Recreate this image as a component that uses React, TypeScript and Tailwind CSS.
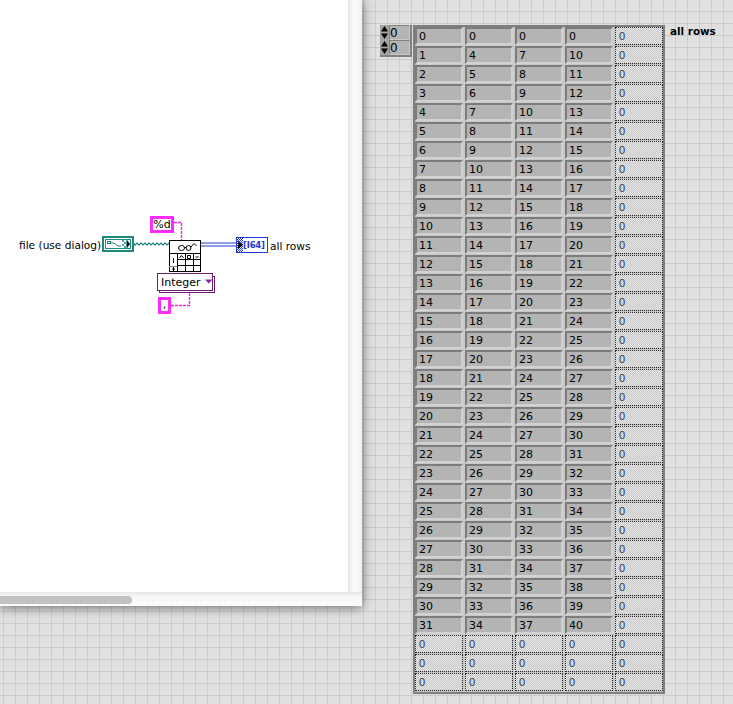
const font = "font-['DejaVu_Sans','Liberation_Sans',sans-serif]";

const rows = Array.from({ length: 35 }, (_, r) => r);

function cellValue(r: number, c: number) {
  if (r === 0) return 0;
  return r + c * 3;
}

function DataCell({ value }: { value: number }) {
  return (
    <div className="flex h-[18px] w-[48px] items-center border-2 border-t-[#7c7c7c] border-l-[#7c7c7c] border-r-[#d2d2d2] border-b-[#d2d2d2] bg-[#b4b4b4] pl-[2px] text-[11px] leading-none text-black">
      {value}
    </div>
  );
}

function EmptyCell() {
  return (
    <div className="flex h-[18px] w-[48px] items-center border border-dotted border-[#222] bg-[repeating-conic-gradient(#c8c8c8_0%_25%,#e6e6e6_0%_50%)] bg-[length:2px_2px] pl-[3px] font-['Liberation_Sans',sans-serif] text-[11px] leading-none text-[#2f3658]">
      0
    </div>
  );
}

function Spinner() {
  return (
    <div className="flex h-[15px] items-center">
      <svg width="9" height="15" viewBox="0 0 9 15" className="shrink-0">
        <rect width="9" height="15" fill="#a4a4a4" />
        <path d="M4.500 1 8 6.500H1z" fill="#000" />
        <path d="M4.500 14 1 8.500h7z" fill="#000" />
      </svg>
      <div className="flex h-[15px] flex-1 items-center border border-[#c8c8c8] border-t-[#808080] border-l-[#808080] bg-[#b4b4b4] text-[12px] leading-none text-black">
        0
      </div>
    </div>
  );
}

function PinkConstant({ className, children }: { className: string; children: string }) {
  return (
    <div className={`absolute flex items-center justify-center border-[3px] border-[#ff2bff] bg-white text-[11px] leading-none text-black ${className}`}>
      {children}
    </div>
  );
}

function Wires() {
  const teal = "M134 243.5" + Array.from({ length: 18 }, (_, i) => ` L${135 + i * 2} ${i % 2 ? 243 : 245}`).join("");
  return (
    <svg width="348" height="592" className="absolute left-0 top-0">
      <path d={teal} fill="none" stroke="#1c7f78" strokeWidth="1.2" />
      <path d="M201 243H236M201 246H236" stroke="#1f38d8" strokeWidth="1" />
      <path d="M201 244.5H236" stroke="#fff" strokeWidth="1" />
      <path d="M174 222.5H181.5V240" fill="none" stroke="#f020f0" strokeWidth="1.3" strokeDasharray="3 1" />
      <path d="M171 305.5H189.5V291" fill="none" stroke="#f020f0" strokeWidth="1.3" strokeDasharray="3 1" />
    </svg>
  );
}

function ReadIcon() {
  return (
    <svg width="32" height="32" viewBox="0 0 32 32" className="absolute left-[169px] top-[240px]">
      <rect x="0.5" y="0.5" width="31" height="31" fill="#fff" stroke="#000" />
      <path d="M0 13.5H32" stroke="#000" />
      <ellipse cx="12.500" cy="8" rx="3" ry="2.500" fill="none" stroke="#000" />
      <ellipse cx="19.500" cy="8" rx="2.500" ry="2.500" fill="none" stroke="#000" />
      <path d="M15.500 7.500h1.500M22 7l3-3.500 2.500 2.500" fill="none" stroke="#000" />
      <path d="M8.500 14v18M16.500 14v18M24.500 14v18M8 19.500H32M8 25.500H32" stroke="#000" fill="none" />
      <path d="M4.500 18v5M3 29h3M4.500 27v4" stroke="#000" />
      <path d="M0 26.500H8" stroke="#888" />
      <path d="M10.500 18l2-2.500 2 2.500M18.500 15.500h3v3h-3zM26.500 17h3" fill="none" stroke="#000" />
    </svg>
  );
}

function Diagram() {
  return (
    <div className={`relative flex-1 overflow-hidden bg-white ${font}`}>
      <Wires />
      <span className="absolute left-[19px] top-[238px] text-[10.6px] leading-[14px] text-black">file (use dialog)</span>
      <div className="absolute left-[102px] top-[236px] h-[16px] w-[32px] border-[2px] border-[#1c8a80] bg-white p-[1px]">
        <div className="relative h-full w-full border border-[#1c8a80]">
          <svg width="24" height="8" viewBox="0 0 24 8" className="absolute left-0 top-0">
            <rect x="1.500" y="1.500" width="3" height="2" fill="#fff" stroke="#1c7f78" />
            <path d="M5 3h3l4 3h3" fill="none" stroke="#1c7f78" />
            <path d="M16 0h2v2h-2zM18 2h2v2h-2zM16 4h2v2h-2zM18 6h2v2h-2zM20 0h1v8h-1z" fill="#5aa9a2" />
            <path d="M21 0l3 4-3 4z" fill="#000" />
          </svg>
        </div>
      </div>
      <PinkConstant className="left-[150px] top-[216px] h-[17px] w-[24px]">%d</PinkConstant>
      <ReadIcon />
      <div className="absolute left-[236px] top-[237px] flex h-[16px] w-[32px] items-center border border-[#1f38d8] bg-white">
        <div className="relative h-full w-[6px] shrink-0 bg-[repeating-conic-gradient(#1f38d8_0%_25%,#ffffff_0%_50%)] bg-[length:2px_2px]">
          <svg width="5" height="8" viewBox="0 0 5 8" className="absolute left-[1px] top-[3px]">
            <path d="M0 0l5 4-5 4z" fill="#000" />
          </svg>
        </div>
        <span className="text-[8.5px] font-bold leading-none tracking-[-0.2px] text-[#1f38d8]">[I64]</span>
      </div>
      <span className="absolute left-[270px] top-[239px] text-[10.6px] leading-[14px] text-black">all rows</span>
      <div className="absolute left-[159px] top-[276px] h-[17px] w-[56px] border border-[#6d1b6d] bg-white" />
      <div className="absolute left-[157px] top-[273px] flex h-[18px] w-[56px] items-center border border-[#6d1b6d] bg-white pl-[3px] text-[11px] leading-none text-black">
        Integer
        <svg width="9" height="5" viewBox="0 0 9 5" className="ml-[4px] mb-[2px]">
          <path d="M0 0h9L4.500 5z" fill="#8a2a9a" />
        </svg>
      </div>
      <PinkConstant className="left-[158px] top-[297px] h-[17px] w-[13px] items-end pb-[1px]">,</PinkConstant>
    </div>
  );
}

export default function App() {
  return (
    <div className={`flex h-[704px] w-[733px] overflow-hidden bg-[#e0e0e0] bg-[linear-gradient(#cbcbcb_1px,transparent_1px),linear-gradient(90deg,#cbcbcb_1px,transparent_1px)] bg-[length:12px_12px] bg-[position:3px_11px] ${font}`}>
      <div className="flex h-[606px] w-[362px] shrink-0 flex-col rounded-br-[4px] bg-[#f4f4f4] shadow-[0_1px_12px_rgba(0,0,0,0.55)]">
        <div className="flex flex-1">
          <Diagram />
          <div className="w-[14px] bg-[linear-gradient(90deg,#e6e6e6,#fbfbfb_40%,#f2f2f2)]" />
        </div>
        <div className="flex h-[14px] bg-[linear-gradient(#e6e6e6,#f6f6f6_30%,#fbfbfb)] pt-[4px]">
          <div className="h-[8px] w-[132px] rounded-r-[4px] bg-[#c2c2c2]" />
        </div>
      </div>

      <div className="ml-[18px] mt-[25px] h-[32px] w-[32px] shrink-0 border-b-2 border-r-2 border-[#808080] bg-[#b4b4b4]">
        <Spinner />
        <Spinner />
      </div>

      <div className="ml-[1px] mt-[25px] h-[669px] shrink-0 border-2 border-[#7f7f7f] bg-[#c8c8c8]">
        <div className="grid grid-cols-[repeat(5,48px)] gap-x-[2px] gap-y-[1px]">
          {rows.map((r) =>
            [0, 1, 2, 3, 4].map((c) =>
              r < 32 && c < 4 ? <DataCell key={`${r}-${c}`} value={cellValue(r, c)} /> : <EmptyCell key={`${r}-${c}`} />
            )
          )}
        </div>
      </div>

      <span className="ml-[5px] mt-[24px] text-[10.4px] font-bold leading-[14px] text-black">all rows</span>
    </div>
  );
}
